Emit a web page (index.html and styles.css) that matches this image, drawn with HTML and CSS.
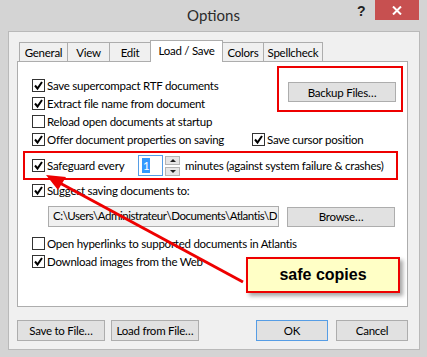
FILE: index.html
```html
<!DOCTYPE html>
<html lang="en">
  <head>
    <meta charset="UTF-8">
    <title>Options</title>
    <link rel="stylesheet" href="styles.css">
  </head>
  <body>
    <div class="window">
      <div class="titlebar">
        <span class="title">Options</span>
        <span class="help">?</span>
        <span class="close">
          <svg width="10" height="9" viewBox="0 0 10 9"><path d="M1 0.5 L9 8.5 M9 0.5 L1 8.5" stroke="#fff" stroke-width="2"/></svg>
        </span>
      </div>

      <div class="client">
        <div class="tabs">
          <div class="tab tab-general">General</div>
          <div class="tab tab-view">View</div>
          <div class="tab tab-edit">Edit</div>
          <div class="tab active">Load / Save</div>
          <div class="tab tab-colors">Colors</div>
          <div class="tab tab-spell">Spellcheck</div>
        </div>

        <div class="panel">
          <div class="top">
            <div class="col">
              <label class="check"><span class="box on"></span>Save supercompact RTF documents</label>
              <label class="check"><span class="box on"></span>Extract file name from document</label>
              <label class="check"><span class="box"></span>Reload open documents at startup</label>
            </div>
            <div class="mark backup-mark">
              <button class="btn backup">Backup Files…</button>
            </div>
          </div>

          <div class="row">
            <label class="check"><span class="box on"></span>Offer document properties on saving</label>
            <label class="check cursor"><span class="box on"></span>Save cursor position</label>
          </div>

          <div class="mark safeguard">
            <label class="check"><span class="box on"></span>Safeguard every</label>
            <div class="spinner">
              <span class="spin-input"><span class="sel">1</span></span>
              <span class="spin-btns">
                <span class="spin up"></span>
                <span class="spin down"></span>
              </span>
            </div>
            <span class="after">minutes (against system failure &amp; crashes)</span>
          </div>

          <label class="check suggest"><span class="box on"></span>Suggest saving documents to:</label>

          <div class="path-row">
            <div class="path">C:\Users\Administrateur\Documents\Atlantis\D</div>
            <button class="btn browse">Browse…</button>
          </div>

          <label class="check hyper"><span class="box"></span>Open hyperlinks to supported documents in Atlantis</label>
          <label class="check"><span class="box on"></span>Download images from the Web</label>
        </div>

        <div class="footer">
          <button class="btn wide">Save to File…</button>
          <button class="btn wide">Load from File…</button>
          <span class="spacer"></span>
          <button class="btn small ok">OK</button>
          <button class="btn small">Cancel</button>
        </div>
      </div>

      <!-- annotation: arrow + callout -->
      <svg class="arrow" width="427" height="357" viewBox="0 0 427 357">
        <line x1="243" y1="282" x2="58" y2="182" stroke="#ee0000" stroke-width="3"/>
        <polygon points="46,175 66,177 58,190" fill="#ee0000"/>
      </svg>
      <div class="callout">safe copies</div>
    </div>
  </body>
</html>
```

FILE: styles.css
```css
* {
  margin: 0;
  padding: 0;
  box-sizing: border-box;
}

body {
  background-color: #d4d4d4;
  font-family: 'Lato', 'Liberation Sans', sans-serif;
  font-size: 11.5px;
  letter-spacing: -0.25px;
  color: #000;
}

.window {
  position: relative;
  width: 427px;
  height: 357px;
  background-color: #d4d4d4;
}

/* Title bar */
.titlebar {
  position: relative;
  height: 31px;
  display: flex;
  justify-content: center;
  align-items: center;
}

.title {
  font-size: 15px;
  letter-spacing: 0;
  color: #2b2b2b;
  margin-top: -1px;
}

.help {
  position: absolute;
  left: 357px;
  top: 3px;
  font-family: 'Liberation Sans', sans-serif;
  font-weight: bold;
  font-size: 14px;
  color: #222;
}

.close {
  position: absolute;
  left: 375px;
  top: 0;
  width: 44px;
  height: 20px;
  background-color: #c75050;
  display: flex;
  justify-content: center;
  align-items: center;
}

/* Client area */
.client {
  margin: 0 7px 0 8px;
  height: 319px;
  background-color: #f0f0f0;
  border: 1px solid #b9b9b9;
  padding: 8px 11px 0 8px;
  display: flex;
  flex-direction: column;
}

.tabs {
  display: flex;
  align-items: flex-end;
  height: 21px;
  padding-left: 2px;
  position: relative;
  z-index: 1;
}

.tab {
  height: 19px;
  border: 1px solid #adadad;
  border-bottom: none;
  margin-right: -1px;
  background-color: #f0f0f0;
  display: flex;
  justify-content: center;
  align-items: center;
}

.tab-general { width: 49px; }
.tab-view { width: 43px; }
.tab-edit { width: 42px; }
.tab-colors { width: 42px; }
.tab-spell { width: 60px; }

.tab.active {
  width: 73px;
  height: 22px;
  margin: 0 -1px -1px 0;
  padding-bottom: 2px;
  background-color: #fff;
  position: relative;
}

.panel {
  height: 246px;
  background-color: #fff;
  border: 1px solid #adadad;
  padding-top: 14px;
}

.check {
  display: flex;
  align-items: center;
  height: 18px;
  padding-left: 14px;
  white-space: nowrap;
}

.box {
  width: 13px;
  height: 13px;
  border: 1px solid #333;
  background-color: #fff;
  margin-right: 2px;
  flex-shrink: 0;
}

.box.on {
  background: #fff url("data:image/svg+xml,%3Csvg xmlns='http://www.w3.org/2000/svg' width='11' height='11'%3E%3Cpath d='M2 5.5 L4.5 8.5 L9 2' fill='none' stroke='%23000' stroke-width='2'/%3E%3C/svg%3E") no-repeat center;
}

.top {
  display: flex;
  justify-content: space-between;
}

.mark {
  border: 2px solid #ee0000;
}

.backup-mark {
  margin: -10px 4px 0 0;
  height: 46px;
  padding: 14px 5px 0 9px;
}

.btn {
  font-family: inherit;
  font-size: 11.5px;
  letter-spacing: -0.25px;
  color: #000;
  background-color: #e1e1e1;
  border: 1px solid #adadad;
  height: 20px;
}

.backup,
.browse {
  width: 108px;
}

.row {
  display: flex;
}

.row .check:first-child {
  width: 234px;
}

.cursor {
  padding-left: 0;
}

.safeguard {
  display: flex;
  align-items: center;
  height: 29px;
  margin: 3px 9px 0 5px;
}

.safeguard .check {
  padding-left: 7px;
  width: 113px;
}

.spinner {
  display: flex;
  align-items: center;
}

.spin-input {
  width: 25px;
  height: 21px;
  border: 1px solid #569de5;
  padding: 2px 0 0 3px;
}

.sel {
  display: inline-block;
  background-color: #3399ff;
  color: #fff;
  padding: 0 1px;
  line-height: 15px;
}

.spin-btns {
  display: flex;
  flex-direction: column;
  gap: 2px;
  margin-left: 2px;
}

.spin {
  width: 15px;
  height: 9px;
  background-color: #e6e6e6;
  border: 1px solid #b4b4b4;
  display: flex;
  justify-content: center;
  align-items: center;
}

.spin.up::after {
  content: '';
  border: 3px solid transparent;
  border-bottom: 3px solid #222;
  border-top: none;
}

.spin.down::after {
  content: '';
  border: 3px solid transparent;
  border-top: 3px solid #222;
  border-bottom: none;
}

.after {
  margin-left: 5px;
  white-space: nowrap;
}

.suggest {
  margin-top: 1px;
}

.path-row {
  display: flex;
  align-items: center;
  margin: 7px 0 7px 30px;
}

.path {
  width: 231px;
  height: 21px;
  border: 1px solid #acacac;
  background-color: #f0f0f0;
  padding: 2px 1px 2px 4px;
  letter-spacing: -0.45px;
  white-space: nowrap;
  overflow: hidden;
}

.browse {
  margin-left: 8px;
}

/* Footer buttons */
.footer {
  display: flex;
  margin-top: 13px;
  gap: 6px;
}

.btn.wide {
  width: 88px;
  height: 21px;
}

.btn.small {
  width: 72px;
  height: 21px;
}

.footer .ok {
  border-color: #569de5;
  margin-right: 2px;
}

.spacer {
  flex: 1;
}

/* Annotation overlay */
.arrow {
  position: absolute;
  left: 0;
  top: 0;
  pointer-events: none;
}

.callout {
  position: absolute;
  left: 246px;
  top: 257px;
  width: 154px;
  height: 36px;
  background-color: #ffffc6;
  border: 2px solid #ee0000;
  box-shadow: 3px 3px 4px rgba(0, 0, 0, 0.35);
  font-family: 'Liberation Sans', sans-serif;
  font-weight: bold;
  font-size: 16px;
  letter-spacing: 0;
  display: flex;
  justify-content: center;
  align-items: center;
}
```
